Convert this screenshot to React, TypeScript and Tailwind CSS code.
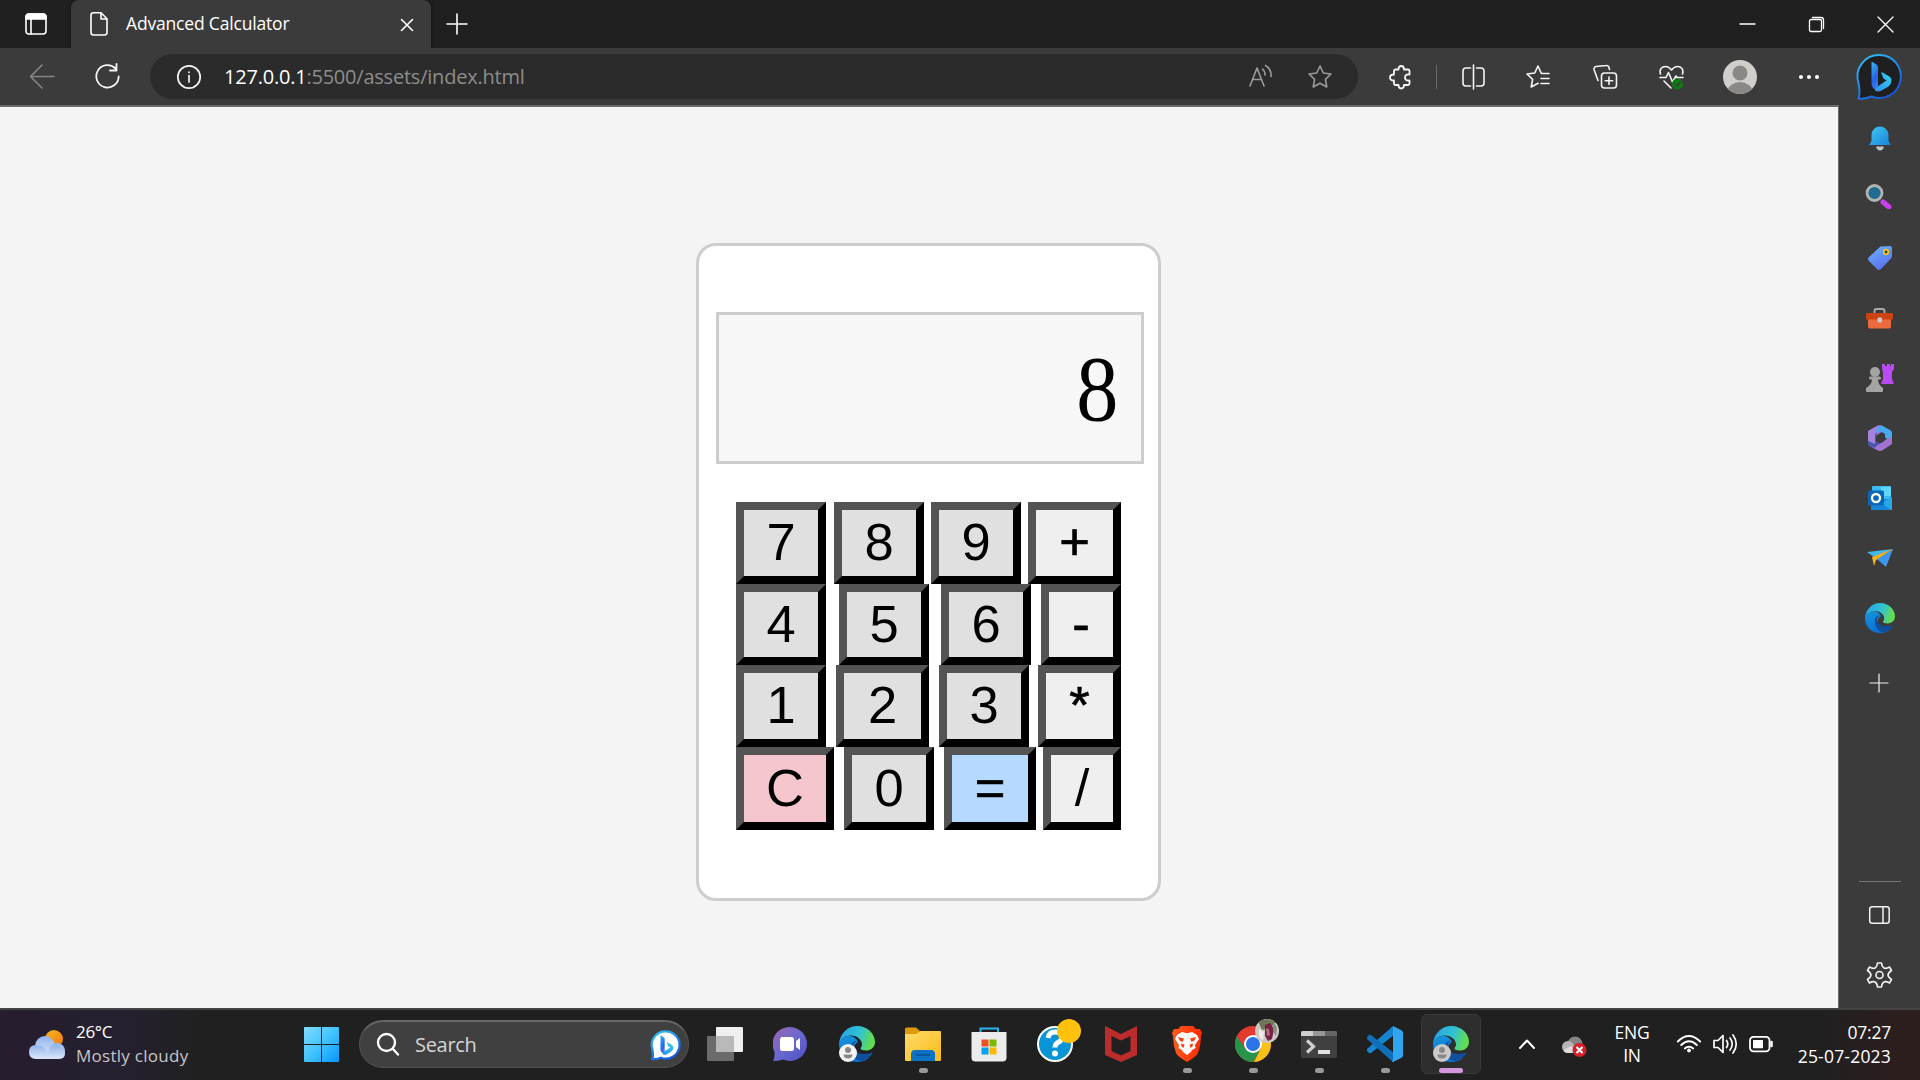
import React from "react";

type IconProps = { w: number; h?: number; box?: string; children: React.ReactNode; className?: string; sw?: number };

function Svg({ w, h = w, box, children, className = "", sw = 1.6 }: IconProps) {
  return (
    <svg
      width={w}
      height={h}
      viewBox={box ?? `0 0 ${w} ${h}`}
      fill="none"
      stroke="currentColor"
      strokeWidth={sw}
      strokeLinecap="round"
      strokeLinejoin="round"
      className={`block shrink-0 overflow-visible ${className}`}
    >
      {children}
    </svg>
  );
}

function EdgeLogo({ size, id }: { size: number; id: string }) {
  return (
    <svg width={size} height={size} viewBox="0 0 36 36" className="block shrink-0">
      <defs>
        <linearGradient id={`${id}a`} x1="3" y1="10" x2="35" y2="20" gradientUnits="userSpaceOnUse">
          <stop offset="0" stopColor="#2aa8e4" />
          <stop offset=".5" stopColor="#31c4cf" />
          <stop offset=".85" stopColor="#5fd95b" />
          <stop offset="1" stopColor="#63dd4c" />
        </linearGradient>
        <linearGradient id={`${id}b`} x1="8" y1="9" x2="14" y2="36" gradientUnits="userSpaceOnUse">
          <stop offset="0" stopColor="#1693dd" />
          <stop offset="1" stopColor="#0b6fcf" />
        </linearGradient>
      </defs>
      <path d="M0 18C0 29 8 36 18 36c6 0 9-2 12-4-9 2-15-3-15-9 0-4 2-6 4-7-2-5-6-6-9-6C5 10 0 14 0 18Z" fill={`url(#${id}b)`} />
      <path d="M0 18C1 7 9 0 18 0c11 0 18 8 18 16 0 6-5 8.500-9 8.500-3.500 0-5.500-1-5.500-2 0-1 1.500-1.500 1.500-4 0-5-5-9-11-9C6 9.500 1 13 0 18Z" fill={`url(#${id}a)`} />
      <path d="M12 20c-1 8 4 15 11 15 5-1 9-5 10.500-8 0-.700-.500-.700-1-.400-2 1-4 1.400-7 1.400-7 0-12-4-11-9 .4-2 2-3.500 3.500-4-3-.500-5.500 1.500-6 5Z" fill="#104f9c" />
    </svg>
  );
}

function BingMark({ id }: { id: string }) {
  return (
    <>
      <defs>
        <linearGradient id={id} x1="0" y1="0" x2=".3" y2="1">
          <stop offset="0" stopColor="#35b5f5" />
          <stop offset=".7" stopColor="#2563eb" />
          <stop offset="1" stopColor="#2f7bf0" />
        </linearGradient>
        <linearGradient id={`${id}2`} x1="0" y1="1" x2="1" y2="0">
          <stop offset="0" stopColor="#2d8cf4" />
          <stop offset="1" stopColor="#32d6ee" />
        </linearGradient>
      </defs>
      <path d="M0 1 Q0 0 1 .500L5 3Q6.500 4 6.500 6V25L4 28Q0 26 0 22Z" fill={`url(#${id})`} />
      <path d="M4 29.500Q7 30.500 10 29L17 25Q20 22 20 19 20 16 17 14.500L11 11Q9 10 10 12L12 17 15 19 6 25Q2 28 4 29.500Z" fill={`url(#${id}2)`} />
    </>
  );
}

function Badge() {
  return (
    <svg width="45" height="46" viewBox="0 0 45 46" className="block shrink-0 overflow-visible">
      <defs>
        <linearGradient id="bingring" x1="0" y1="0" x2=".6" y2="1">
          <stop offset="0" stopColor="#2fc3f3" />
          <stop offset="1" stopColor="#1857dd" />
        </linearGradient>
      </defs>
      <path d="M22.500 1a21.500 21.500 0 1 1 -8 41.500C10 44.500 5 45 1.500 44.500 3 40 2.500 34 1.500 29A21.500 21.500 0 0 1 22.500 1Z" fill="#1f1f1f" stroke="url(#bingring)" strokeWidth="2" />
      <g transform="translate(14.500 7.500)"><BingMark id="bm1" /></g>
    </svg>
  );
}

function TabStrip() {
  return (
    <div className="flex h-12 items-end bg-[#202020] text-white">
      <div className="flex h-12 w-[71px] items-center pl-[25px]">
        <Svg w={22}>
          <rect x="1" y="1" width="20" height="20" rx="3" />
          <path d="M1 6V4a3 3 0 0 1 3-3h14a3 3 0 0 1 3 3v2Z" fill="white" />
          <path d="M6 6v15" />
        </Svg>
      </div>
      <div className="flex h-12 w-[360px] items-center rounded-t-lg bg-[#3b3b3b] pl-[19px] shadow-[0_0_4px_#111]">
        <Svg w={18} h={24}>
          <path d="M3.500 .800h7.500l6 6v13.700a2.500 2.500 0 0 1-2.500 2.500h-11A2.500 2.500 0 0 1 1 20.500V3.300A2.500 2.500 0 0 1 3.500.800ZM11 1v6h6" />
        </Svg>
        <span className="ml-[18px] w-[274px] -translate-y-px whitespace-nowrap font-['Open_Sans'] text-[17.500px] leading-6 tracking-[-0.18px]">Advanced Calculator</span>
        <Svg w={12} className="ml-[1px] mt-[1px]"><path d="M.500.500l11 11M11.500.500l-11 11" /></Svg>
      </div>
      <div className="flex h-12 flex-1 items-center pl-4">
        <Svg w={20} className="-mt-px"><path d="M10 0v20M0 10h20" /></Svg>
      </div>
      <div className="flex h-12 w-[207px] items-center">
        <div className="flex w-[69px] justify-center"><Svg w={15} h={2} sw={1.3}><path d="M0 1h15" /></Svg></div>
        <div className="flex w-[69px] justify-center"><Svg w={15} sw={1.3}><rect x=".500" y="2.500" width="12" height="12" rx="1.500" /><path d="M3.500.500h8.500a2.500 2.500 0 0 1 2.500 2.500v8.500" /></Svg></div>
        <div className="flex w-[69px] justify-center"><Svg w={15} sw={1.3}><path d="M0 0l15 15M15 0L0 15" /></Svg></div>
      </div>
    </div>
  );
}

const STAR = "M12 1l3.300 7 7.700 1-5.600 5.300 1.400 7.700L12 18.300 5.200 22l1.400-7.700L1 9l7.700-1Z";

function Slot({ w, children }: { w: string; children: React.ReactNode }) {
  return <div className={`flex shrink-0 items-center justify-center ${w}`}>{children}</div>;
}

function Toolbar() {
  return (
    <div className="flex h-[57px] items-center bg-[#3b3b3b] text-[#f5f5f5]">
      <div className="flex w-[150px] items-center pl-[30px]">
        <Svg w={24} className="text-[#858585]"><path d="M24 11.500H.500M12 0L.500 11.500 12 23" /></Svg>
        <Svg w={25} className="ml-[41px]" sw={1.8}><path d="M20.500 4.500A11.200 11.200 0 1 0 23.700 12.500M21.500 0v6.500h-6.500" /></Svg>
      </div>
      <div className="flex h-[45px] w-[1208px] items-center rounded-full bg-[#2b2b2b] pl-[27px]">
        <Svg w={24} sw={1.7}><circle cx="12" cy="12" r="11.200" /><path d="M12 10.500V17M12 7.200v.200" /></Svg>
        <div className="ml-[23px] w-[1024px] whitespace-nowrap font-['Open_Sans'] text-[20px] leading-7 tracking-[-0.22px] text-[#8d8d8d]"><span className="text-white">127.0.0.1</span>:5500/assets/index.html</div>
        <Svg w={23} h={22} className="-mt-[2px] ml-px text-[#9b9b9b]" sw={1.6}><path d="M1 21L8 3l7 18M3.500 14.500h9M13.500 4q2.500 2 2.500 6M16.500 .500q6 3.500 5.500 11" /></Svg>
        <Svg w={24} className="ml-[36px] text-[#9b9b9b]"><path d={STAR} /></Svg>
      </div>
      <div className="flex w-[85px] items-center pl-[31px]">
        <Svg w={23} h={24} sw={1.8}>
          <path d="M6.500 4.500H9.500C9.500 2 10.500 1 12.200 1S15 2 15 4.500h4Q20.500 4.500 20.500 6V9.500C17.500 9 16 10.300 16 12.500S17.500 16 20.500 15.500V18.500Q20.500 20 19 20H15C15 22.500 14 23.500 12.200 23.500S9.500 22.500 9.500 20H6.500Q5 20 5 18.500V15.500C2.200 15.500 1 14.500 1 12.500S2.200 9.500 5 9.500V6Q5 4.500 6.500 4.500Z" />
        </Svg>
        <div className="ml-6 h-6 w-px shrink-0 bg-[#696969]" />
      </div>
      <Slot w="w-[61px]"><Svg w={23} h={24}><path d="M8.500 3H4a3 3 0 0 0-3 3v12a3 3 0 0 0 3 3h4.500M14.500 3H19a3 3 0 0 1 3 3v12a3 3 0 0 1-3 3h-4.500M11.500 0v24" /></Svg></Slot>
      <Slot w="w-[68px]"><Svg w={24}><path d="M23 8.500h-7.700L12 1 8.700 8 1 9l5.600 5.300L5.200 22l7-3.700M15 13.500h8M15 18.500h8" /></Svg></Slot>
      <Slot w="w-[66px]"><Svg w={24}><rect x="8.500" y="8" width="15" height="15" rx="3" /><path d="M16 12v7.500M12.200 15.700h7.500M5 15.500L1 4.500a2.500 2.500 0 0 1 2-3L13 .500a2.500 2.500 0 0 1 3 2l.500 2" /></Svg></Slot>
      <Slot w="w-[66px]"><Svg w={25} h={24}><path d="M1.500 9C0 4 3 1.500 6.500 1.500c3 0 4.500 1.500 6 3.500 1.500-2 3-3.500 6-3.500C22 1.500 25 4 23.500 9M1 12.500h6l2.500-5 4 9.500 3.500-6 1 1.500h6M5 16l7 7" /><circle cx="18.500" cy="19" r="5.500" fill="#0c7c12" stroke="none" /><path d="M16 19l2 2 3.500-4" stroke="#3b3b3b" /></Svg></Slot>
      <Slot w="w-[72px]">
        <svg width="34" height="34" viewBox="0 0 34 34"><clipPath id="av"><circle cx="17" cy="17" r="17" /></clipPath><g clipPath="url(#av)"><rect width="34" height="34" fill="#d1cfcc" /><circle cx="17" cy="13" r="7.500" fill="#8b8784" /><ellipse cx="17" cy="32" rx="12.500" ry="10" fill="#8b8784" /></g></svg>
      </Slot>
      <Slot w="w-[66px]"><Svg w={22} h={6}><g fill="white" stroke="none"><circle cx="3" cy="3" r="2" /><circle cx="11" cy="3" r="2" /><circle cx="19" cy="3" r="2" /></g></Svg></Slot>
      <Slot w="w-[74px]"><Badge /></Slot>
    </div>
  );
}

const DIGIT = "bg-[#e0e0e0]";
const OP = "bg-[#efefef] [-webkit-text-stroke:0.7px_black]";

type Key = { t: string; c: string };
const ROWS: { h: string; keys: Key[] }[] = [
  { h: "h-[82px]", keys: [{ t: "7", c: `${DIGIT} w-[90px]` }, { t: "8", c: `${DIGIT} w-[90px] ml-2` }, { t: "9", c: `${DIGIT} w-[90px] ml-[7px]` }, { t: "+", c: `${OP} w-[93px] ml-[7px]` }] },
  { h: "h-[81px]", keys: [{ t: "4", c: `${DIGIT} w-[90px]` }, { t: "5", c: `${DIGIT} w-[90px] ml-[13px]` }, { t: "6", c: `${DIGIT} w-[90px] ml-3` }, { t: "-", c: `${OP} w-[80px] ml-[10px]` }] },
  { h: "h-[82px]", keys: [{ t: "1", c: `${DIGIT} w-[90px]` }, { t: "2", c: `${DIGIT} w-[93px] ml-[10px]` }, { t: "3", c: `${DIGIT} w-[90px] ml-[10px]` }, { t: "*", c: `${OP} w-[83px] ml-[9px]` }] },
  { h: "h-[83px]", keys: [{ t: "C", c: "bg-[#f5c6cd] w-[98px]" }, { t: "0", c: `${DIGIT} w-[90px] ml-[10px]` }, { t: "=", c: "bg-[#b6d9ff] [-webkit-text-stroke:0.7px_black] w-[92px] ml-[10px]" }, { t: "/", c: "bg-[#efefef] w-[78px] ml-[7px]" }] },
];

function Calculator() {
  return (
    <div className="mt-[136px] ml-[696px] h-[658px] w-[465px] rounded-[20px] border-[3px] border-[#cdcdcd] bg-white px-[17px] pt-[66px] text-black">
      <div className="flex h-[152px] w-[428px] items-center justify-end border-[3px] border-[#cdcdcd] bg-[#f7f7f7] pr-5 font-['Liberation_Serif'] text-[93.500px] leading-none">
        <span className="mt-[1px] block scale-x-[0.9]">8</span>
      </div>
      <div className="mt-[38px] ml-5 flex flex-col font-['Liberation_Sans'] text-[52.500px] leading-none">
        {ROWS.map((r) => (
          <div key={r.keys[0].t} className={`flex ${r.h}`}>
            {r.keys.map((k) => (
              <button key={k.t} className={`flex h-full shrink-0 items-center justify-center border-8 border-t-[#545454] border-r-black border-b-black border-l-[#545454] pb-[1px] ${k.c}`}>{k.t}</button>
            ))}
          </div>
        ))}
      </div>
    </div>
  );
}

function Sidebar() {
  const icons: React.ReactNode[] = [
    <svg width="22" height="25" viewBox="0 0 22 25"><defs><linearGradient id="bell" x1="0" y1="0" x2="1" y2="1"><stop stopColor="#42c8f5" /><stop offset="1" stopColor="#1683d8" /></linearGradient></defs><path d="M2.500 9a8.500 8.500 0 0 1 17 0v6l2.300 4H.200l2.300-4Z" fill="url(#bell)" /><path d="M7 20.500h8q-1 4-4 4t-4-4Z" fill="#c3c3cc" /></svg>,
    <svg width="27" height="25" viewBox="0 0 27 25" className="-mt-[3px] -ml-[2px]"><path d="M18 18l6 5" stroke="#c940ef" strokeWidth="5" strokeLinecap="round" /><circle cx="9.500" cy="9" r="7.500" fill="#216b93" stroke="#b4b2b0" strokeWidth="2.800" /></svg>,
    <svg width="24" height="24" viewBox="0 0 24 24"><defs><linearGradient id="tag" x1="0" y1="0" x2=".5" y2="1"><stop stopColor="#6db6fb" /><stop offset="1" stopColor="#5b71f1" /></linearGradient></defs><path d="M12.500.500L22 0q2 0 2 2v8.500q0 1-1 2L13 23q-2 2-4 0L1 15q-2-2 0-4Z" fill="url(#tag)" /><circle cx="18" cy="6" r="2.300" fill="#444" stroke="#f0cb16" strokeWidth="1.700" /></svg>,
    <svg width="27" height="21" viewBox="0 0 27 21"><path d="M8.500 6V3q0-2 2-2h6q2 0 2 2v3" stroke="#a9a9a9" strokeWidth="2" fill="none" /><path d="M2 11h23v7.500q0 2-2 2H4q-2 0-2-2Z" fill="#ec6a3f" /><rect y="5" width="27" height="6.500" rx="1" fill="#cc4313" /><rect x="11.500" y="9.500" width="4.500" height="5" rx="1" fill="#c9c9c9" /></svg>,
    <svg width="28" height="28" viewBox="0 0 28 28"><path d="M16 0h3v2h2V0h3v2h1V0h3v5l-2 3v7l2 5H15l2-5V8l-1-3Z" fill="#b94af4" /><g fill="#a6a4a2"><circle cx="9" cy="8" r="5" /><rect x="3" y="12.500" width="12" height="3" rx="1.500" /><path d="M6 15h6q0 6 5 9v3q0 1-1 1H1q-1 0-1-1v-3q6-3 6-9Z" /></g></svg>,
    <svg width="24" height="26" viewBox="0 0 24 26"><path d="M11 0L0 6v14l7 4 2-2V10l8-5Z" fill="#8e7bdf" /><path d="M0 14V6L11 0l-2 11v12l-4-1Z" fill="#a483dc" /><path d="M9 3l4-3 9 5q2 1 2 3v9l-7-4.500V9l-5-3-4 2Z" fill="#49a8ee" /><path d="M0 20l2 1q4 1 7-1l8-5 7-3v7l-9 6q-3 2-6 0Z" fill="#a371d0" /><path d="M9 7L7 9v10l-7-3v4l6 3 6-5-4-4Z" fill="#4556ad" /><path d="M12 8.500l4.500 2.500v5L12 18.500 8 16v-5Z" fill="#3b3b3b" /></svg>,
    <svg width="24" height="24" viewBox="0 0 24 24"><rect x="4" width="19" height="14" rx="1" fill="#39bdf1" /><path d="M13 1h10v9H13Z" fill="#63d6fb" /><path d="M3 13h21v10q0 1-1 1H4q-1 0-1-1Z" fill="#1687d6" /><path d="M24 11L13 17l10 7h1Z" fill="#27a8e8" /><rect y="4.500" width="16" height="15" rx="1.500" fill="#0c66b9" /><circle cx="8" cy="12" r="4" fill="none" stroke="white" strokeWidth="2.300" /></svg>,
    <svg width="26" height="18" viewBox="0 0 26 18"><path d="M0 3L26 0 7 8Z" fill="#44b7ed" /><path d="M26 0L10 10l9 8Z" fill="#3e96ef" /><path d="M26 0L5 8l2 9 2-6Z" fill="#f5b316" /></svg>,
    <EdgeLogo size={30} id="es" />,
  ];
  return (
    <div className="flex w-[81px] flex-col items-center bg-[#3b3b3b] pt-[3px] text-[#f2f2f2]">
      {icons.map((ic, i) => (
        <div key={i} className="flex h-[60px] items-center">{ic}</div>
      ))}
      <div className="mt-[26px] mr-px"><Svg w={18} sw={1.2}><path d="M9 0v18M0 9h18" /></Svg></div>
      <div className="mt-[189px] h-px w-[42px] bg-[#757575]" />
      <div className="mt-6"><Svg w={21} h={18} sw={1.5}><rect x=".700" y=".700" width="19.500" height="16.500" rx="2.500" /><path d="M14 1v16" /></Svg></div>
      <div className="mt-[38px]">
        <Svg w={25} h={26} box="0 0 25 26">
          <path d="M10.500 1h4q.500 4 2.500 5t5.500-1l2 3.500q-3.500 2.500-3.500 4.500t3.500 4.500l-2 3.500q-3.500-2-5.500-1t-2.500 5h-4q-.500-4-2.500-5T2.500 21l-2-3.500Q4 15 4 13T.500 8.500l2-3.500q3.500 2 5.500 1t2.500-5Z" />
          <circle cx="12.500" cy="13" r="3.500" />
        </Svg>
      </div>
    </div>
  );
}

function TaskIcons() {
  const person = (bg: string) => (
    <span className="absolute bottom-0 left-0 block">
      <svg width="18" height="18" viewBox="0 0 18 18" className="block"><circle cx="9" cy="9" r="9" fill={bg} /><circle cx="9" cy="6" r="3" fill="#888" /><path d="M4.500 10.500h9q0 4-4.500 4t-4.500-4Z" fill="#888" /></svg>
    </span>
  );
  const items: { icon: React.ReactNode; run?: boolean; active?: boolean }[] = [
    { icon: <svg width="36" height="34" viewBox="0 0 36 34"><rect x="9" width="27" height="25" rx="1" fill="#efefef" /><rect y="9" width="27" height="25" rx="1" fill="#6b6b6b" /><rect x="9" y="9" width="18" height="16" fill="#b9b9b9" /></svg> },
    { icon: <svg width="34" height="34" viewBox="0 0 34 34" className="-ml-[2px]"><defs><linearGradient id="chat" x1="0" y1="0" x2="1" y2="1"><stop stopColor="#9967ae" /><stop offset=".5" stopColor="#6b68cf" /><stop offset="1" stopColor="#4d50c4" /></linearGradient></defs><path d="M17 0a17 17 0 1 1-7 32.500Q5 34 0 34q2-4 1.500-9A17 17 0 0 1 17 0Z" fill="url(#chat)" /><rect x="7" y="10" width="14" height="14" rx="2.500" fill="white" /><path d="M23 14l4-3v12l-4-3Z" fill="white" /></svg> },
    { icon: <span className="relative block"><EdgeLogo size={36} id="e1" />{person("#f4f4f4")}</span> },
    { icon: <svg width="36" height="34" viewBox="0 0 36 34"><defs><linearGradient id="fold" x1="0" y1="0" x2="1" y2="1"><stop stopColor="#ffdc6b" /><stop offset="1" stopColor="#f9bb17" /></linearGradient></defs><path d="M0 2q0-1.500 1.500-1.500H11l4 3.500h5v4H0Z" fill="#dc9b08" /><path d="M0 7h11l5-3h19q1 0 1 1v28q0 1-1 1H1q-1 0-1-1Z" fill="url(#fold)" /><path d="M6 34V27q0-4 4-4h16q4 0 4 4v7Z" fill="#0d72c3" /><path d="M11 28h14" stroke="#0b4f8c" strokeWidth="1.500" /></svg>, run: true },
    { icon: <svg width="36" height="36" viewBox="0 0 36 36" className="-ml-px"><path d="M9.500 7V2.500H27V7" fill="none" stroke="#2fb1ee" strokeWidth="2" /><path d="M.500 6h35v25.500q0 4-4 4h-27q-4 0-4-4Z" fill="#ececec" /><path d="M10.500 13.500h7v7h-7Z" fill="#f05124" /><path d="M18.500 13.500h7v7h-7Z" fill="#7db900" /><path d="M10.500 21.500h7v7h-7Z" fill="#02a3ef" /><path d="M18.500 21.500h7v7h-7Z" fill="#ffb800" /></svg> },
    { icon: <span className="relative -top-[3.500px] left-[3.500px] block"><svg width="44" height="43" viewBox="0 0 44 43"><circle cx="18" cy="25" r="17" fill="#0795d6" stroke="white" strokeWidth="2" /><path d="M11 19q1-6 7-6 7 0 7 5.500 0 3-4 5-3 1.500-3 5" fill="none" stroke="white" strokeWidth="5" /><circle cx="18" cy="34.500" r="3" fill="white" /><circle cx="32" cy="12" r="12" fill="#ffc00e" /></svg></span> },
    { icon: <svg width="32" height="36" viewBox="0 0 32 36"><path d="M0 0l16 8L32 0v29l-16 7L0 29ZM6.500 10v15l9.500 4.500 9.500-4.500V10L16 14.500Z" fill="#bc2c2c" fillRule="evenodd" /></svg> },
    { icon: <svg width="30" height="36" viewBox="0 0 30 36"><defs><linearGradient id="br" x1="0" x2="1"><stop stopColor="#ff5a1e" /><stop offset="1" stopColor="#ff2b00" /></linearGradient></defs><path d="M9 0h12l3 3 4 0 2 4-1 3q0 9-3 17-1 3-11 9Q5 30 4 27 1 19 1 10L0 7l2-4h4Z" fill="url(#br)" /><path d="M10 6l5 1.200L20 6l5 3 2 4-4 6 .500 3-5 3-3.500-2-3.500 2-5-3 .500-3-4-6 2-4Z" fill="white" /><path d="M6 11l6 1.500-1.500 3.500-3-1.500ZM24 11l-6 1.500 1.500 3.500 3-1.500ZM9 17.500l3.500 1-1 3.500-2-1.500ZM21 17.500l-3.500 1 1 3.500 2-1.500Z" fill="#fb4114" /><path d="M15 22.500l5 2.500-5 4-5-4Z" fill="white" /></svg>, run: true },
    { icon: <span className="relative -top-[3.500px] left-[4px] block"><svg width="44" height="43" viewBox="0 0 44 43"><defs><clipPath id="cc"><circle cx="18" cy="25" r="18" /></clipPath><clipPath id="cp"><circle cx="32" cy="12" r="12" /></clipPath></defs><g clipPath="url(#cc)"><rect y="7" width="36" height="36" fill="#e33b2e" /><path d="M-2 12L10.200 29.500 18 34 25.800 29.500 18 44 0 44Z" fill="#26954a" /><path d="M18 16h20v30H17.500l8.300-16.500Z" fill="#fbc116" /></g><circle cx="18" cy="25" r="9" fill="white" /><circle cx="18" cy="25" r="7" fill="#2b74ea" /><g clipPath="url(#cp)"><rect x="20" width="25" height="25" fill="#cdc6c3" /><path d="M23 2L33 0l8 3-6 6-8 2Z" fill="#6d7757" /><path d="M30 6l5-2 4 6-2 10-4 2-3-5Z" fill="#792046" /><path d="M38 3l4 5-1 9-3-5Z" fill="#85907a" /><path d="M24 10l5 3-1 9-4-4Z" fill="#ece9e8" /><path d="M31 9l3 1 1 6-3 1Z" fill="#a8727e" /></g></svg></span>, run: true },
    { icon: <svg width="36" height="27" viewBox="0 0 36 27"><rect width="36" height="27" rx="1.500" fill="#404040" /><path d="M0 5V1.500Q0 0 1.500 0H12v5Z" fill="#cfcfcf" /><path d="M12 0h12v5H12Z" fill="#979797" /><path d="M24 0h10.500Q36 0 36 1.500V5H24Z" fill="#666" /><path d="M6 9.500l6.500 6-6.500 6" fill="none" stroke="#cfcfcf" strokeWidth="3.200" /><path d="M17 19h12v4H17Z" fill="#e1e1e1" /></svg>, run: true },
    { icon: <svg width="36" height="36" viewBox="0 0 36 36"><path d="M26 0L0 23q-1 1 0 2l2 2q1 .700 2 0L27 9Z" fill="#1684cf" /><path d="M26 36L0 13q-1-1 0-2l2-2q1-.700 2 0L27 27Z" fill="#0f6fb8" /><path d="M26 0l8 4q2 1 2 2.500v23q0 1.500-2 2.500l-8 4q-1 .300-1-1l1-1V2Z" fill="#30a6ee" /></svg>, run: true },
    { icon: <span className="relative block"><EdgeLogo size={36} id="e2" />{person("#cccac8")}</span>, active: true },
  ];
  return (
    <>
      {items.map((it, i) => (
        <div key={i} className="flex h-[68px] w-[66px] shrink-0 items-center justify-center">
          <div className={it.active ? "relative flex h-[60px] w-[60px] items-center justify-center rounded-md border border-[#3a3a3a] bg-[#2d2d2d]" : "relative flex h-[60px] w-[60px] items-center justify-center"}>
            {it.icon}
            {it.run && <span className="absolute bottom-[1px] left-[26px] h-[5px] w-[9px] rounded-full bg-[#999]" />}
            {it.active && <span className="absolute bottom-0 left-[17px] h-[5px] w-6 rounded-full bg-[#d797e0]" />}
          </div>
        </div>
      ))}
    </>
  );
}

function Taskbar() {
  return (
    <div className="flex h-[72px] items-center border-t-2 border-[#444] bg-[linear-gradient(90deg,#261d2f_0px,#252030_120px,#202020_205px,#202020_1820px,#2d1e1e_1900px)] pb-[2px] font-['Open_Sans'] text-white">
      <div className="flex w-[304px] items-center pl-[29px]">
        <svg width="36" height="32" viewBox="0 0 36 32" className="mt-[2px]"><defs><linearGradient id="cl" x1="0" y1="0" x2="0" y2="1"><stop stopColor="#90b4ec" /><stop offset="1" stopColor="#dce6fa" /></linearGradient><linearGradient id="sun" x1="0" y1="0" x2="1" y2="1"><stop stopColor="#f5b722" /><stop offset="1" stopColor="#f17811" /></linearGradient></defs><circle cx="25" cy="10" r="9" fill="url(#sun)" /><circle cx="16" cy="17" r="10" fill="url(#cl)" /><circle cx="28" cy="22" r="8" fill="url(#cl)" /><path d="M7 16q5 0 8 3l4 4q4-9 11-6 6 3 6 8 0 5-7 5H7q-7 0-7-7t7-7Z" fill="url(#cl)" /></svg>
        <div className="ml-[11px] whitespace-nowrap text-[17px] leading-6">
          <div className="tracking-[-0.3px]">26°C</div>
          <div className="tracking-[0.28px] text-[#c6c6c6]">Mostly cloudy</div>
        </div>
      </div>
      <svg width="35" height="35" viewBox="0 0 35 35" className="block shrink-0"><defs><linearGradient id="win" x1="0" y1="0" x2="35" y2="35" gradientUnits="userSpaceOnUse"><stop stopColor="#80dcff" /><stop offset=".5" stopColor="#42c3fd" /><stop offset="1" stopColor="#0596ff" /></linearGradient></defs><path d="M1 0h16v17H0V1q0-1 1-1ZM18 0h16q1 0 1 1v16H18ZM0 18h17v17H1q-1 0-1-1ZM18 18h17v16q0 1-1 1H18Z" fill="url(#win)" /></svg>
      <div className="ml-5 flex h-12 w-[330px] shrink-0 items-center rounded-full border border-t-2 border-[#505050] border-t-[#666] bg-[#404040] pl-[17px]">
        <Svg w={22} h={23} sw={2.4}><circle cx="9.500" cy="9.500" r="8.500" /><path d="M16 16l5 5.500" /></Svg>
        <span className="ml-[16px] w-[89px] text-[20px] leading-7 tracking-[-0.3px] text-[#d6d6d6]">Search</span>
        <svg width="30" height="30" viewBox="0 0 45 46" className="ml-[147px] block overflow-visible"><path d="M22.500 2a21 21 0 1 1-8 40.500C10 44.500 5 45 1.500 44.500 3 40 2.500 34 1.500 29A21 21 0 0 1 22.500 2Z" fill="white" stroke="url(#bingring)" strokeWidth="3.500" /><g transform="translate(14 8)"><BingMark id="bm2" /></g></svg>
      </div>
      <div className="flex w-[803px] shrink-0 pl-[3px]"><TaskIcons /></div>
      <div className="flex flex-1 items-center">
        <Svg w={16} h={8} className="ml-[27px]" sw={2}><path d="M1 8l7-7.500L15 8" /></Svg>
        <svg width="25" height="21" viewBox="0 0 25 21" className="ml-[27px] mt-1 block shrink-0 overflow-visible"><circle cx="13" cy="8" r="7.500" fill="#858585" /><circle cx="6" cy="11" r="6" fill="#b7b7b7" /><path d="M2 14l7-4 6 7H6q-4 0-4-3Z" fill="#ddd" /><circle cx="17.500" cy="14" r="7" fill="#d61f2c" /><path d="M14.500 11l6 6M20.500 11l-6 6" stroke="white" strokeWidth="2" /></svg>
        <div className="ml-[23px] w-[44px] text-center text-[17.500px] leading-[23px] tracking-[-0.2px]">ENG<br />IN</div>
        <Svg w={24} h={18} className="ml-[23px]" sw={1.9}><path d="M.800 6.500q11-11 22.400 0M4.200 10q8-7.500 15.600 0M7.800 13.500q4.200-3.500 8.400 0" /><circle cx="12" cy="15.500" r="1.500" fill="white" stroke="white" strokeWidth="1" /></Svg>
        <Svg w={24} h={20} className="ml-[12px]" sw={1.7}><path d="M1 6.500h4L10 1.500v17l-5-5H1ZM13.500 6.500q2.500 3.500 0 7M17 4q4.500 6 0 12M20 1q6.500 9 0 18" /></Svg>
        <Svg w={24} h={16} className="ml-[12px]" sw={1.8}><rect x="1" y=".800" width="19.500" height="14.500" rx="3.500" /><rect x="4" y="4" width="10" height="8.200" rx=".500" fill="white" stroke="none" /><path d="M22.500 6v4" strokeWidth="2.500" /></Svg>
        <div className="ml-auto mr-[29px] whitespace-nowrap text-right text-[17.500px] leading-6"><div className="tracking-[-0.2px]">07:27</div><div className="tracking-[0.2px]">25-07-2023</div></div>
      </div>
    </div>
  );
}

export default function App() {
  return (
    <div className="flex h-[1080px] w-[1920px] flex-col overflow-hidden font-['Open_Sans']">
      <TabStrip />
      <Toolbar />
      <div className="flex h-[903px]">
        <div className="w-[1839px] border-t-2 border-r border-[#6a6a6a] bg-[#f4f4f4]">
          <Calculator />
        </div>
        <Sidebar />
      </div>
      <Taskbar />
    </div>
  );
}
